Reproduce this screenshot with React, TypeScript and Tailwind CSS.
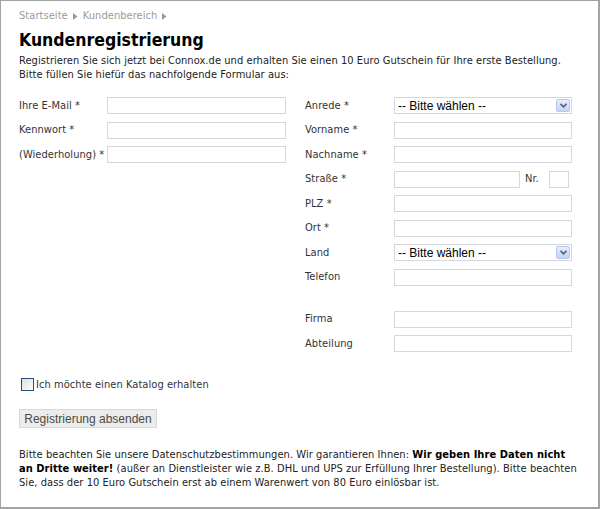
import React from "react";

const labelCls = "text-[11px] leading-[14px] text-[#333]";
const inputCls = "h-[17px] border border-[#d6d6e0] bg-white";

const Input = ({ w }: { w: string }) => <div className={`${inputCls} ${w}`} />;

const Select = () => (
  <div className={`${inputCls} w-[178px] flex items-center justify-between pl-[3px] pr-[1px]`}>
    <span className="text-[12px] leading-[14px] text-black tracking-normal font-['Liberation_Sans',Arial,sans-serif]">
      -- Bitte wählen --
    </span>
    <span className="w-[14px] h-[13px] rounded-[2px] bg-gradient-to-b from-[#e6eefc] to-[#c4d4f2] border border-[#b7c8ea] flex items-center justify-center">
      <svg width="7" height="5" viewBox="0 0 7 5">
        <path d="M0.5 0.8 L3.5 3.8 L6.5 0.8" stroke="#4d6185" strokeWidth="1.6" fill="none" />
      </svg>
    </span>
  </div>
);

const Row = ({ label, lw, children }: { label: string; lw: string; children: React.ReactNode }) => (
  <div className="flex h-[24.5px] items-start">
    <div className={`${lw} ${labelCls} h-[17px] flex items-center whitespace-nowrap`}>{label}</div>
    {children}
  </div>
);

const Caret = () => (
  <svg width="5" height="7" viewBox="0 0 5 7" className="mx-[5px] inline-block">
    <path d="M0 0 L4.5 3.5 L0 7 Z" fill="#999" />
  </svg>
);

export default function App() {
  return (
    <div className="w-[600px] h-[509px] bg-white border-l border-t border-r-2 border-b-2 border-[#a3a3a3] font-['DejaVu_Sans_Condensed','DejaVu_Sans',Verdana,sans-serif] tracking-[0.06px] text-[#222]">
      <div className="pl-[18px] pr-[19px]">
        <div className="pt-[8px] text-[11px] leading-[14px] text-[#9a9a9a] flex items-center">
          <span>Startseite</span>
          <Caret />
          <span>Kundenbereich</span>
          <Caret />
        </div>

        <h1 className="mt-[6px] text-[17.5px] leading-[22px] font-bold text-black tracking-normal">Kundenregistrierung</h1>

        <p className="mt-[3px] text-[11px] leading-[14px] text-[#222]">
          Registrieren Sie sich jetzt bei Connox.de und erhalten Sie einen 10 Euro Gutschein für Ihre erste Bestellung.
          <br />
          Bitte füllen Sie hiefür das nachfolgende Formular aus:
        </p>

        <div className="mt-[15px] flex">
          <div className="w-[267px]">
            <Row label="Ihre E-Mail *" lw="w-[88px]">
              <Input w="w-[179px]" />
            </Row>
            <Row label="Kennwort *" lw="w-[88px]">
              <Input w="w-[179px]" />
            </Row>
            <Row label="(Wiederholung) *" lw="w-[88px]">
              <Input w="w-[179px]" />
            </Row>
          </div>

          <div className="ml-[19px] w-[267px]">
            <Row label="Anrede *" lw="w-[89px]">
              <Select />
            </Row>
            <Row label="Vorname *" lw="w-[89px]">
              <Input w="w-[178px]" />
            </Row>
            <Row label="Nachname *" lw="w-[89px]">
              <Input w="w-[178px]" />
            </Row>
            <Row label="Straße *" lw="w-[89px]">
              <Input w="w-[126px]" />
              <span className={`${labelCls} ml-[5px] w-[24px] h-[17px] flex items-center`}>Nr.</span>
              <Input w="w-[20px]" />
            </Row>
            <Row label="PLZ *" lw="w-[89px]">
              <Input w="w-[178px]" />
            </Row>
            <Row label="Ort *" lw="w-[89px]">
              <Input w="w-[178px]" />
            </Row>
            <Row label="Land" lw="w-[89px]">
              <Select />
            </Row>
            <Row label="Telefon" lw="w-[89px]">
              <Input w="w-[178px]" />
            </Row>
            <div className="h-[17.5px]" />
            <Row label="Firma" lw="w-[89px]">
              <Input w="w-[178px]" />
            </Row>
            <Row label="Abteilung" lw="w-[89px]">
              <Input w="w-[178px]" />
            </Row>
          </div>
        </div>

        <label className="mt-[18px] ml-[2px] flex items-center">
          <span className="w-[13px] h-[13px] border border-[#2a4d77] bg-gradient-to-br from-[#dcdcd6] to-white" />
          <span className={`${labelCls} ml-[2px]`}>Ich möchte einen Katalog erhalten</span>
        </label>

        <button className="mt-[17.5px] w-[138px] h-[19px] bg-[#ececec] border border-[#d8d8d8] text-[12px] leading-[14px] text-[#4a4a4a] tracking-normal font-['Liberation_Sans',Arial,sans-serif]">
          Registrierung absenden
        </button>

        <p className="mt-[18px] text-[11px] leading-[14px] text-[#222]">
          Bitte beachten Sie unsere Datenschutzbestimmungen. Wir garantieren Ihnen:{" "}
          <b className="font-bold text-black">Wir geben Ihre Daten nicht an Dritte weiter!</b> (außer an Dienstleister wie z.B. DHL und UPS
          zur Erfüllung Ihrer Bestellung). Bitte beachten Sie, dass der 10 Euro Gutschein erst ab einem Warenwert von 80 Euro
          einlösbar ist.
        </p>
      </div>
    </div>
  );
}
